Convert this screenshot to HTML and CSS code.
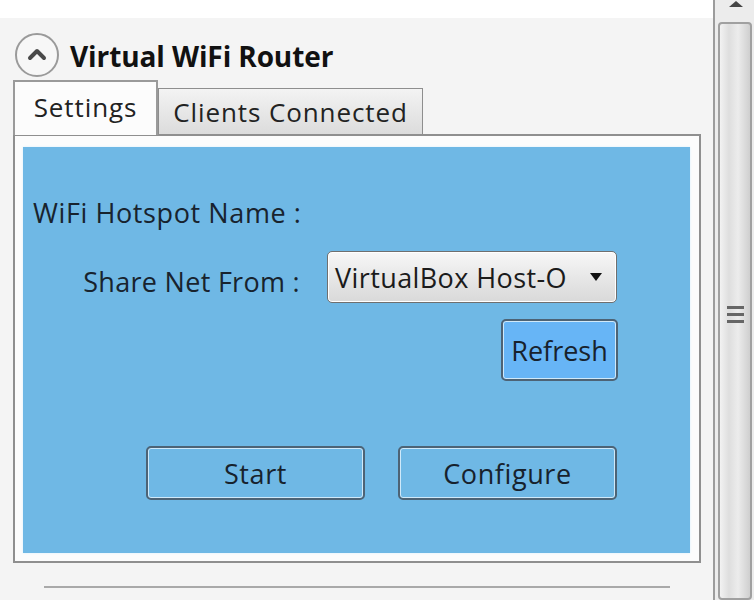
FILE: index.html
```html
<!DOCTYPE html>
<html>
<head>
<meta charset="utf-8">
<link rel="stylesheet" href="styles.css">
</head>
<body>
<div class="main">
  <div class="topstrip"></div>
  <div class="header">
    <svg class="collapse" width="46" height="46" viewBox="0 0 46 46">
      <circle cx="23" cy="23" r="21" fill="#f7f7f7" stroke="#9a9a9a" stroke-width="2"/>
      <path d="M16 26 L23 19 L30 26" fill="none" stroke="#4a4a4a" stroke-width="4" stroke-linecap="round" stroke-linejoin="round"/>
    </svg>
    <span class="title">Virtual WiFi Router</span>
  </div>
  <div class="tabs">
    <div class="tab active">Settings</div>
    <div class="tab">Clients Connected</div>
  </div>
  <div class="panel">
    <div class="blue">
      <div class="label first">WiFi Hotspot Name :</div>
      <div class="row share">
        <div class="label right">Share Net From :</div>
        <div class="combo"><span>VirtualBox Host-O</span><span class="arrow"></span></div>
      </div>
      <div class="row refresh-row">
        <div class="btn refresh">Refresh</div>
      </div>
      <div class="row actions">
        <div class="btn wide">Start</div>
        <div class="btn wide">Configure</div>
      </div>
    </div>
  </div>
  <div class="rule"></div>
</div>
<div class="scrollbar">
  <div class="uparrow"></div>
  <div class="thumb">
    <div class="grip"><i></i><i></i><i></i></div>
  </div>
</div>
</body>
</html>
```
FILE: styles.css
```css
html, body {
  margin: 0;
  padding: 0;
}
body {
  width: 754px;
  height: 600px;
  overflow: hidden;
  display: flex;
  background: #f4f4f4;
  font-family: "Open Sans", "Noto Sans", sans-serif;
  color: #1b1b1b;
}
.main {
  width: 713px;
  flex: none;
}
.topstrip {
  height: 18px;
  background: #ffffff;
}
.header {
  display: flex;
  align-items: center;
  gap: 10px;
  padding: 13px 0 0 14px;
  height: 48px;
}
.collapse {
  flex: none;
  display: block;
}
.title {
  font-weight: 700;
  font-size: 28px;
  letter-spacing: -0.1px;
  color: #111;
  line-height: 34px;
  margin-top: 2px;
}
.tabs {
  display: flex;
  align-items: flex-end;
  margin-left: 13px;
  margin-top: 1px;
  position: relative;
  z-index: 1;
}
.tab {
  box-sizing: border-box;
  width: 265px;
  height: 46px;
  border: 1px solid #8e8e8e;
  border-bottom: none;
  background: linear-gradient(#f3f3f3, #dcdcdc);
  font-size: 26px;
  letter-spacing: 0.9px;
  line-height: 46px;
  text-align: center;
  color: #222;
}
.tab.active {
  width: 145px;
  height: 55px;
  background: #fcfcfc;
  border: 2px solid #9a9a9a;
  border-bottom: none;
  line-height: 50px;
  margin-bottom: -1px;
  padding-bottom: 4px;
}
.panel {
  box-sizing: border-box;
  margin-left: 13px;
  width: 688px;
  height: 429px;
  border: 2px solid #8f8f8f;
  background: #fcfcfc;
  padding: 11px 9px 8px 8px;
}
.blue {
  height: 406px;
  background: #6fb8e5;
  box-shadow: 0 0 2px #d6f0ff;
  padding: 49px 0 0 10px;
  box-sizing: border-box;
}
.label {
  font-size: 27px;
  letter-spacing: 0.6px;
  line-height: 34px;
  color: #18232e;
}
.row {
  display: flex;
  align-items: center;
}
.share {
  margin-top: 21px;
  gap: 27px;
}
.label.right {
  width: 267px;
  text-align: right;
  letter-spacing: 0.3px;
  padding-top: 9px;
}
.combo {
  box-sizing: border-box;
  width: 290px;
  height: 52px;
  border: 1px solid #6f6f6f;
  border-radius: 5px;
  background: linear-gradient(#f7f7f7, #e6e6e6 55%, #d9d9d9);
  box-shadow: inset 0 0 0 1px #ffffff;
  display: flex;
  align-items: center;
  justify-content: space-between;
  padding: 0 14px 0 7px;
  font-size: 27px;
  letter-spacing: 0.4px;
  color: #1b1b1b;
}
.arrow {
  width: 0;
  height: 0;
  border-left: 6px solid transparent;
  border-right: 6px solid transparent;
  border-top: 8px solid #111;
}
.refresh-row {
  margin-top: 16px;
  padding-left: 468px;
}
.btn {
  box-sizing: border-box;
  border: 2px solid #4d6375;
  border-radius: 5px;
  box-shadow: inset 0 0 0 1px #cfe9fa;
  display: flex;
  align-items: center;
  justify-content: center;
  font-size: 27px;
  letter-spacing: 0px;
  color: #17222d;
}
.refresh {
  width: 117px;
  height: 62px;
  background: #67b5f6;
}
.actions {
  margin-top: 65px;
  padding-left: 113px;
  gap: 33px;
}
.btn.wide {
  width: 219px;
  height: 54px;
  background: #6fb8e5;
  letter-spacing: 0.6px;
}
.rule {
  margin: 23px 0 0 44px;
  width: 626px;
  height: 2px;
  background: #a9a9a9;
}
.scrollbar {
  flex: none;
  width: 41px;
  box-sizing: border-box;
  border-left: 2px solid #9c9c9c;
  background: #ececec;
  position: relative;
  display: flex;
  flex-direction: column;
  align-items: center;
}
.uparrow {
  width: 0;
  height: 0;
  border-left: 7px solid transparent;
  border-right: 7px solid transparent;
  border-bottom: 6px solid #444;
  margin-top: 1px;
  margin-left: 2px;
}
.thumb {
  box-sizing: border-box;
  margin-top: 15px;
  width: 34px;
  height: 620px;
  border: 2px solid #a0a0a0;
  border-radius: 4px;
  background: linear-gradient(90deg, #f2f2f2, #dedede 30%, #ececec 60%, #cfcfcf);
  display: flex;
  justify-content: center;
}
.grip {
  margin-top: 282px;
  display: flex;
  flex-direction: column;
  gap: 4px;
  margin-left: 2px;
}
.grip i {
  display: block;
  width: 17px;
  height: 3px;
  background: #666;
}
```
